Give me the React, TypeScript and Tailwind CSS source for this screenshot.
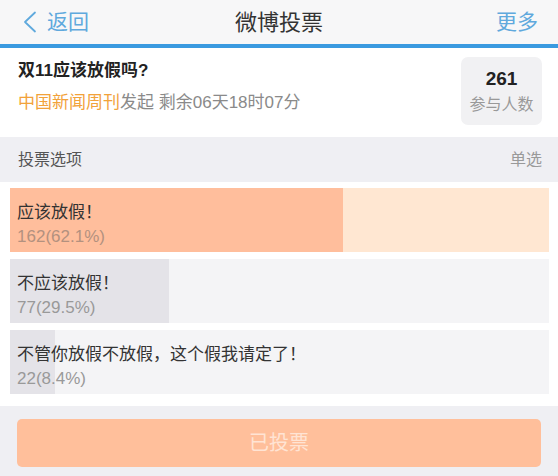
// 微博投票 — 投票结果页（已投票状态）

const options = [
  { label: '应该放假！', count: 162, pct: 62.1, fill: 343 - 10, voted: true },
  { label: '不应该放假！', count: 77, pct: 29.5, fill: 169 - 10, voted: false },
  { label: '不管你放假不放假，这个假我请定了！', count: 22, pct: 8.4, fill: 55 - 10, voted: false },
]

function BackChevron() {
  return (
    <svg width="16" height="22" viewBox="0 0 16 22" fill="none">
      <path d="M13 1.5 L3 11 L13 20.5" stroke="#5fa9dd" strokeWidth="1.8" strokeLinecap="round" strokeLinejoin="round" />
    </svg>
  )
}

// ─── 顶部导航栏 ───────────────────────────────────────────────
function NavBar() {
  return (
    <div className="h-[48px] bg-[#f7f7f8] border-b-4 border-[#3a9ae0] flex items-center justify-between pl-[22px] pr-[20px] relative">
      <div className="flex items-center gap-[9px] text-[21px] text-[#5fa9dd]">
        <BackChevron />
        <span>返回</span>
      </div>
      <div className="absolute left-1/2 -translate-x-1/2 text-[22px] text-[#333]">微博投票</div>
      <div className="text-[21px] text-[#5fa9dd]">更多</div>
    </div>
  )
}

// ─── 投票标题 + 参与人数 ─────────────────────────────────────
function Header() {
  return (
    <div className="h-[89px] bg-white flex justify-between pl-[18px] pr-[16px]">
      <div className="pt-[12px]">
        <div className="text-[17px] font-bold text-[#222] leading-[22px]">双11应该放假吗?</div>
        <div className="mt-[10px] text-[17px] leading-[22px] text-[#8a8a8a]">
          <span className="text-[#f2a23a]">中国新闻周刊</span>发起 剩余06天18时07分
        </div>
      </div>
      <div className="mt-[9px] w-[81px] h-[68px] rounded-[7px] bg-[#f1f1f3] flex flex-col items-center justify-center">
        <div className="text-[19px] font-bold text-[#222] leading-[22px]">261</div>
        <div className="mt-[5px] text-[16px] text-[#999] leading-[20px]">参与人数</div>
      </div>
    </div>
  )
}

function OptionRow({ label, count, pct, fill, voted }: (typeof options)[number]) {
  return (
    <div className={`relative h-[64px] ${voted ? 'bg-[#ffe7d2]' : 'bg-[#f4f4f6]'}`}>
      <div
        className={`absolute left-0 top-0 h-full ${voted ? 'bg-[#ffbe9c]' : 'bg-[#e4e3e8]'}`}
        style={{ width: fill }}
      />
      <div className="relative pl-[7px] pt-[14px]">
        <div className="text-[17px] leading-[22px] text-[#333]">{label}</div>
        <div className={`mt-[3px] text-[17px] leading-[20px] ${voted ? 'text-[#b3917f]' : 'text-[#999]'}`}>
          {count}({pct}%)
        </div>
      </div>
    </div>
  )
}

export default function App() {
  return (
    <div
      className="w-[558px] h-[476px] overflow-hidden bg-white"
      style={{ fontFamily: '"Liberation Sans", "Noto Sans CJK SC", sans-serif' }}
    >
      <NavBar />
      <Header />

      {/* 投票选项标题栏 */}
      <div className="h-[45px] bg-[#efeff3] flex items-center justify-between pl-[18px] pr-[16px]">
        <span className="text-[16px] text-[#555]">投票选项</span>
        <span className="text-[16px] text-[#999]">单选</span>
      </div>

      {/* 选项列表 */}
      <div className="bg-white pt-[6px] pb-[12px] pl-[10px] pr-[9px] flex flex-col gap-[7px]">
        {options.map((o) => (
          <OptionRow key={o.label} {...o} />
        ))}
      </div>

      {/* 底部按钮 */}
      <div className="bg-[#efeff3] pt-[13px] pb-[10px] pl-[17px] pr-[17px]">
        <div className="h-[48px] rounded-[5px] bg-[#ffbf9b] flex items-center justify-center text-[20px] text-[#ffe4d4]">
          已投票
        </div>
      </div>
    </div>
  )
}
